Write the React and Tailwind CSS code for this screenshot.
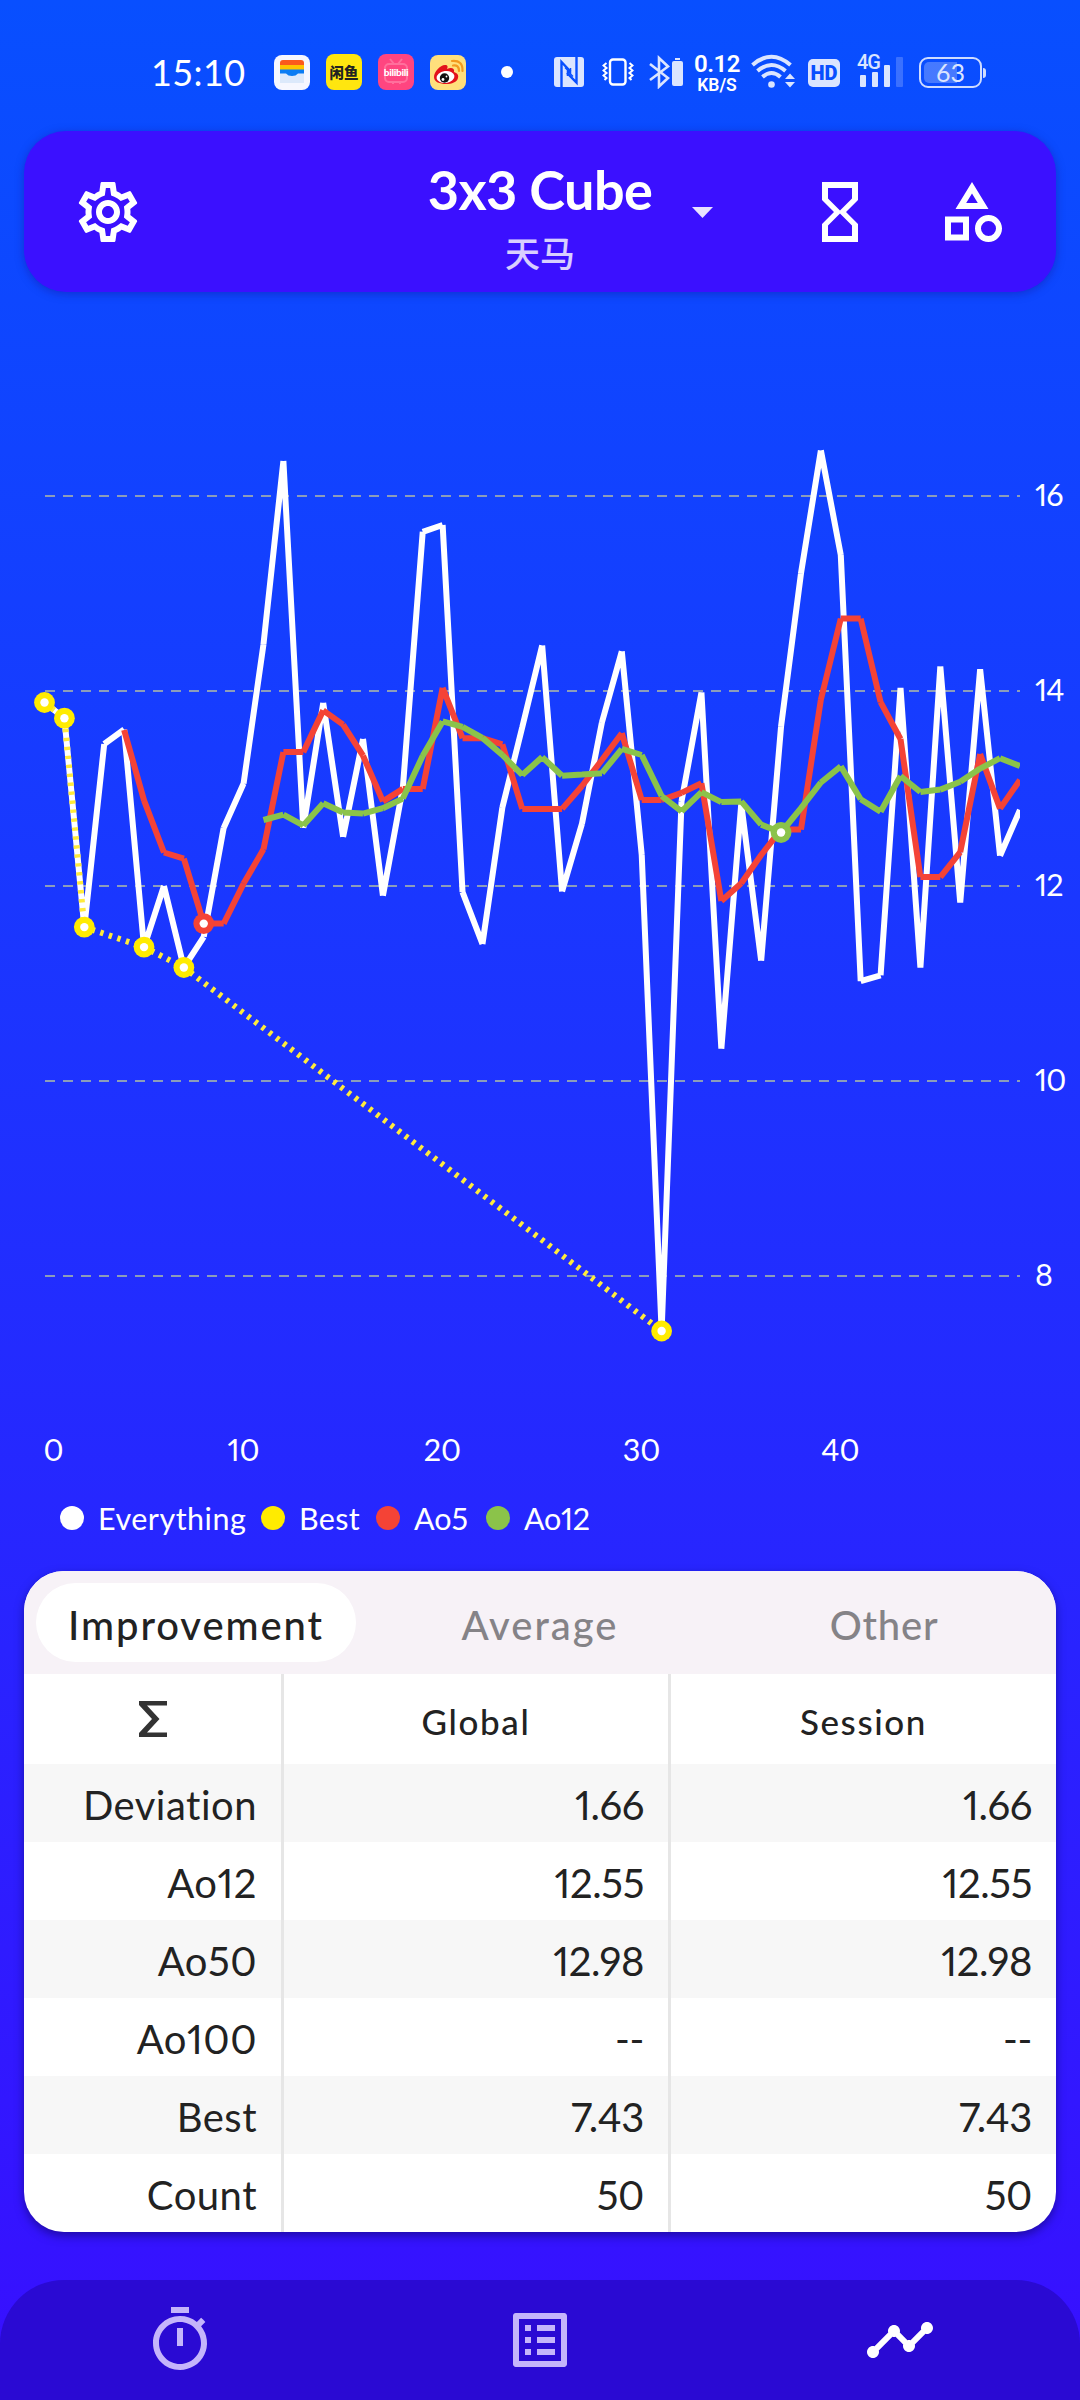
import React from 'react';
import {
  MdOutlineSettings,
  MdHourglassEmpty,
  MdOutlineCategory,
  MdOutlineTimer,
  MdOutlineListAlt,
  MdTimeline,
} from 'react-icons/md';

// Chart geometry, in pixels of the chart's own box
const TOP = 292;
const X0 = 44.5;
const STEP = 19.907;

// y of every solve / average, in screen pixels
const everything = [
  702.5, 718.2, 927.1, 744, 729.5, 947.1, 886, 967.5, 936.8, 827.9, 783.6, 644.3, 461, 827.9, 702.9, 836.8, 739,
  895.7, 787.9, 531.8, 525, 892.1, 944, 807.5, 727.1, 645.4, 891.4, 823.6, 722.5, 651.4, 854.6, 1331, 801.4,
  692.5, 1048.7, 804, 960.7, 726.4, 573.6, 450.4, 555, 981.2, 975.3, 687.9, 967.5, 666.4, 902.5, 669.3, 855.7, 810,
];
const ao5 = [
  730, 800.4, 852.5, 858.6, 923.6, 923.6, 883.6, 849.3, 752.1, 752.1, 710.4, 724.6, 755.7, 801.4, 788.9, 788.9,
  687.9, 738.2, 738.2, 744.3, 808.9, 808.9, 808.9, 786, 760, 733.2, 800, 800, 792.9, 783.2, 901, 883.2, 855,
  829.6, 829.6, 699.6, 618.6, 618.6, 702.1, 739, 877.1, 877.1, 852.1, 754, 808.6, 780,
];
const ao12 = [
  820, 814.6, 825.4, 803.2, 812.5, 813.6, 808.2, 798.6, 755.7, 721.4, 726.8, 737.9, 755, 775, 757.1, 775.7, 774.6,
  773.2, 748.9, 755, 796, 811.4, 792.1, 802.1, 801.4, 824.6, 832.5, 808.2, 782.5, 766.4, 799.3, 811.8, 776, 792,
  789.6, 781.8, 768.6, 758.2, 766,
];
const best = [0, 1, 2, 5, 7, 31];

const px = (i) => X0 + i * STEP;
const py = (y) => y - TOP;

// each segment is its own subpath, so the corners stay unjoined
const segments = (ys, start) =>
  ys
    .slice(1)
    .map((y, i) => `M${px(start + i)} ${py(ys[i])}L${px(start + i + 1)} ${py(y)}`)
    .join('');

const yLabels = [16, 14, 12, 10, 8];
const xLabels = [
  ['0', 53.5],
  ['10', 243.5],
  ['20', 442.5],
  ['30', 641.5],
  ['40', 840.5],
];

const legend = [
  { name: 'Everything', dot: 'bg-white', box: 'w-[201px] tracking-[0.5px]' },
  { name: 'Best', dot: 'bg-[#ffeb00]', box: 'w-[115px] tracking-[0.3px]' },
  { name: 'Ao5', dot: 'bg-[#f44336]', box: 'w-[110px]' },
  { name: 'Ao12', dot: 'bg-[#8bc34a]', box: 'w-[110px] tracking-[-0.3px]' },
];

const rows = [
  ['Deviation', '1.66', '1.66'],
  ['Ao12', '12.55', '12.55'],
  ['Ao50', '12.98', '12.98'],
  ['Ao100', '--', '--'],
  ['Best', '7.43', '7.43'],
  ['Count', '50', '50'],
];

const Point = ({ i, y, color }) => (
  <g>
    <circle cx={px(i)} cy={py(y)} r="10.4" fill={color} />
    <circle cx={px(i)} cy={py(y)} r="4.2" fill="#fff" />
  </g>
);

const StatusBar = () => (
  <div className="flex h-[131px] items-start pt-[54px] text-white">
    <div className="ml-[151px] h-9 w-[95px] whitespace-nowrap text-[36px] leading-9 tracking-[0.4px]">15:10</div>

    {/* wallet */}
    <svg className="ml-7 mt-px size-9" viewBox="0 0 36 36">
      <rect width="36" height="35" rx="8" fill="#f6f7ff" />
      <path d="M6 14V8q0-3 3-3h18q3 0 3 3v6z" fill="#fb5a1c" />
      <path d="M6 10h24v5H6z" fill="#ffc400" />
      <path d="M6 17.500h24V28H6z" fill="#dce9fb" />
      <path d="M6 14.500h24v4h-6q-2 2.500-6 2.500t-6-2.500H6z" fill="#0a7cf4" />
    </svg>
    <div className="ml-4 flex size-9 items-center justify-center rounded-lg bg-[#ffe60f] font-['Noto_Sans_CJK_SC',sans-serif] text-[14.500px] font-black leading-9 text-[#222]">
      闲鱼
    </div>
    <div className="relative ml-4 flex size-9 items-center justify-center rounded-lg bg-[#ff4580]">
      <svg className="absolute inset-0 size-9" viewBox="0 0 36 36" fill="none" stroke="#ff6f9c" strokeWidth="2">
        <rect x="7" y="10" width="22" height="18" rx="4" />
        <path d="m12 5 4 5M24 5l-4 5M15 28v2M22 28v2" />
      </svg>
      <span className="relative text-[10px] font-black leading-none tracking-[-0.300px] text-white">bilibili</span>
    </div>
    {/* weibo */}
    <svg className="ml-4 mt-px size-9" viewBox="0 0 36 36">
      <rect width="36" height="35" rx="8" fill="#ffdf7c" />
      <path d="M4 22c0-5 6-12 11-12 3 0 3 2 2 4 4-2 8-1 7 3 3 1 5 3 4 6-1 4-6 6-12 6S4 27 4 22z" fill="#e3121b" />
      <ellipse cx="15.500" cy="22" rx="9" ry="6" fill="#fff" transform="rotate(-8 15.500 22)" />
      <circle cx="14.500" cy="23" r="4.700" fill="#111" />
      <circle cx="13" cy="24.500" r="1.400" fill="#fff" />
      <circle cx="16.500" cy="21.500" r="0.900" fill="#fff" />
      <path d="M23 10.500q6-1 6 5.500M22 6q11-1 10.500 10" fill="none" stroke="#f39a1e" strokeWidth="2.200" strokeLinecap="round" />
    </svg>
    <div className="ml-[35px] mt-3 size-3 rounded-full bg-white" />

    {/* nfc */}
    <svg className="ml-[41px] mt-[3px] h-[30px] w-[30px]" viewBox="0 0 30 30">
      <rect width="30" height="30" rx="3" fill="#dbe5ff" />
      <path d="M7.500 30V5l9 9.500M22.500 0v25.500L13 16" fill="none" stroke="#084fff" strokeWidth="2.400" />
      <path d="M11 10.500 16.500 16V11M19 19.500 13.500 14v5" fill="none" stroke="#084fff" strokeWidth="1.500" />
    </svg>
    {/* vibrate */}
    <svg className="ml-[18px] mt-1 h-7 w-8" viewBox="0 0 32 28" fill="none" stroke="#fff" strokeWidth="2.400">
      <rect x="8" y="1.500" width="15.500" height="25" rx="3" />
      <path d="m4.500 5-3 2.500 3 2.500-3 2.500 3 2.500-3 2.500 3 2.500-2 2M27.500 5l3 2.500-3 2.500 3 2.500-3 2.500 3 2.500-3 2.500 2 2" strokeWidth="2" />
    </svg>
    {/* bluetooth with battery */}
    <svg className="ml-[15px] mt-px h-[34px] w-[34px]" viewBox="0 0 34 34" fill="none" stroke="#dbe5ff" strokeWidth="2.600">
      <path d="m1 9 18 14-9 8.500V3l9 8.500L1 25" />
      <rect x="23" y="6" width="11" height="25" rx="2" fill="#dbe5ff" stroke="none" />
      <path d="M26 4h5" strokeWidth="2" />
    </svg>
    <div className="-mt-[2px] ml-[11px] w-[46px] text-center font-['Roboto',sans-serif] font-semibold">
      <div className="h-6 text-[24px] leading-6 tracking-[-0.5px]">0.12</div>
      <div className="h-[18px] text-[17.500px] leading-[19px]">KB/S</div>
    </div>
    {/* wifi */}
    <svg className="ml-[11px] h-9 w-[45px]" viewBox="0 0 45 36" fill="none" stroke="#dbe5ff" strokeWidth="4">
      <path d="M1.500 11q19-16.500 38 0M6.500 17q14-12 28 0M11.500 23q9-8 18 0" />
      <circle cx="20.500" cy="30.500" r="3.300" fill="#dbe5ff" stroke="none" />
      <path d="m34 25 5-5.500 5 5.500zM34 28l5 5.500 5-5.500z" fill="#dbe5ff" stroke="none" />
    </svg>
    <div className="ml-3 mt-[5px] h-7 w-8 rounded-[5px] bg-[#dbe5ff] text-center font-['Roboto',sans-serif] text-[20px] font-black leading-7 text-[#084fff]">
      HD
    </div>
    <div className="ml-[17px] flex w-[46px] flex-col text-[#dbe5ff]">
      <div className="h-[14px] font-['Roboto',sans-serif] text-[20px] font-medium leading-4 tracking-[-1px]">4G</div>
      <div className="-mt-[11px] ml-[3px] flex items-end gap-1.5">
        <div className="h-3 w-1.5 rounded-[1px] bg-[#dbe5ff]" />
        <div className="h-[15px] w-1.5 rounded-[1px] bg-[#dbe5ff]" />
        <div className="h-[22px] w-1.5 rounded-[1px] bg-[#dbe5ff]" />
        <div className="h-[30px] w-[7px] rounded-[1px] bg-white/20" />
      </div>
    </div>
    <div className="ml-[16px] mt-[3px] flex items-center">
      <div className="flex h-[31px] w-[63px] rounded-[9px] border-2 border-[#cfdcff] p-[3px]">
        <div className="flex w-full items-center justify-center rounded-[5px] bg-gradient-to-r from-white/25 from-63% to-transparent to-63% text-[25px] leading-none text-[#dbe5ff]">
          63
        </div>
      </div>
      <div className="ml-px h-2.5 w-[3px] rounded-r bg-[#cfdcff]" />
    </div>
  </div>
);

const Header = () => (
  <header className="mx-6 flex h-[161px] items-center rounded-[42px] bg-[#3b10ff] text-white shadow-[0_2px_10px_rgba(20,10,120,0.35)]">
    <MdOutlineSettings className="ml-12 size-[72px] shrink-0" />
    <div className="ml-[284px] flex w-[224px] shrink-0 flex-col items-center">
      <h1 className="mt-2.5 whitespace-nowrap text-[54px] font-bold leading-[62px] tracking-[-0.6px]">3x3 Cube</h1>
      <p className="mt-2 font-['Noto_Sans_CJK_SC',sans-serif] text-[35px] font-medium leading-[46px] text-white/80">天马</p>
    </div>
    <svg className="ml-[40px] mt-[1px] h-[11px] w-[21px] shrink-0" viewBox="0 0 21 11">
      <path d="M0 0h21L10.500 11z" fill="#e9e2ff" />
    </svg>
    <MdHourglassEmpty className="ml-[91px] size-[72px] shrink-0" />
    <MdOutlineCategory className="ml-[60px] size-[72px] shrink-0" />
  </header>
);

const Chart = () => (
  <svg className="block h-[1188px] w-[1080px]" viewBox="0 0 1080 1188">
    <g stroke="#8c9dba" strokeWidth="2" strokeDasharray="10 8">
      {yLabels.map((v, i) => (
        <path key={v} d={`M45 ${204 + i * 195}H1020`} />
      ))}
    </g>
    <g fontSize="30.500" fill="#fff" className="proportional-nums">
      {yLabels.map((v, i) => (
        <text key={v} x="1035" y={214 + i * 195} letterSpacing="-0.8">
          {v}
        </text>
      ))}
      {xLabels.map(([label, x]) => (
        <text key={label} x={x} y="1169" textAnchor="middle">
          {label}
        </text>
      ))}
    </g>
    <clipPath id="plot">
      <path d="M0 0H1020V1188H0z" />
    </clipPath>
    <g fill="none" strokeWidth="6" clipPath="url(#plot)">
      <path d={segments(everything, 0)} stroke="#fff" />
      <path
        d={'M' + best.map((i) => `${px(i)} ${py(everything[i])}`).join('L')}
        stroke="#ffeb3b"
        strokeDasharray="3.4 5.6"
      />
      <path d={segments(ao5, 4)} stroke="#f44336" />
      <path d={segments(ao12, 11)} stroke="#8bc34a" />
    </g>
    {best.map((i) => (
      <Point key={i} i={i} y={everything[i]} color="#ffeb00" />
    ))}
    <Point i={8} y={923.6} color="#f44336" />
    <Point i={37} y={832.5} color="#8bc34a" />
  </svg>
);

const Legend = () => (
  <div className="flex h-[91px] items-center pb-4 pl-[60px] text-[30.500px] proportional-nums text-white">
    {legend.map((l) => (
      <div key={l.name} className={`flex items-center gap-[14px] ${l.box}`}>
        <span className={`size-6 shrink-0 rounded-full ${l.dot}`} />
        <span className="mt-0.5">{l.name}</span>
      </div>
    ))}
  </div>
);

const StatsCard = () => (
  <section className="mx-6 h-[661px] overflow-hidden rounded-[40px] bg-white text-[#222] shadow-[0_4px_10px_rgba(10,0,80,0.5)]">
    <div className="grid h-[103px] grid-cols-[344px_344px_344px] bg-[#f7f2f7] py-3 text-center text-[40px] font-medium text-[#858387]">
      <div className="mx-3 flex h-[79px] items-center justify-center rounded-full bg-white pt-1 tracking-[1.9px] text-[#222]">
        Improvement
      </div>
      <div className="flex items-center justify-center pt-1 tracking-[2px]">Average</div>
      <div className="flex items-center justify-center pt-1 tracking-[0.8px]">Other</div>
    </div>
    <div className="grid h-[90px] grid-cols-[260px_387px_385px] text-[35px] font-medium tracking-[1.6px]">
      <div className="flex items-center justify-center border-r-[3px] border-[#e6e6e6]">
        <svg className="h-9 w-7" viewBox="0 0 28 36">
          <path d="M0 0h28v4.500H8L20.500 18 8 31.500h20V36H0v-4l13-14L0 4z" fill="#333" />
        </svg>
      </div>
      <div className="flex items-center justify-center border-r-[3px] border-[#e6e6e6] pt-1">Global</div>
      <div className="flex items-center justify-center pt-1">Session</div>
    </div>
    {rows.map(([label, global, session]) => (
      <div
        key={label}
        className="grid h-[78px] grid-cols-[260px_387px_385px] text-right text-[40px] leading-[82px] proportional-nums nth-[odd]:bg-[#f7f7f7]"
      >
        <div className="border-r-[3px] border-[#e6e6e6] pr-6 tracking-[0.5px]">{label}</div>
        <div className="border-r-[3px] border-[#e6e6e6] pr-6 tracking-[-0.4px]">{global}</div>
        <div className="pr-6 tracking-[-0.4px]">{session}</div>
      </div>
    ))}
  </section>
);

const BottomNav = () => (
  <nav className="mt-12 grid h-[120px] grid-cols-3 items-center justify-items-center rounded-t-[64px] bg-[#2a0ad3] text-[#c5b5fb]">
    <MdOutlineTimer className="size-[72px]" />
    <MdOutlineListAlt className="size-[72px]" />
    <MdTimeline className="size-[72px] text-white" />
  </nav>
);

const App = () => {
  return (
    <div className="h-[2400px] w-[1080px] overflow-hidden bg-linear-to-b/srgb from-[#084fff] to-[#380fff] font-['Lato',sans-serif]">
      <StatusBar />
      <Header />
      <Chart />
      <Legend />
      <StatsCard />
      <BottomNav />
    </div>
  );
};

export default App;
